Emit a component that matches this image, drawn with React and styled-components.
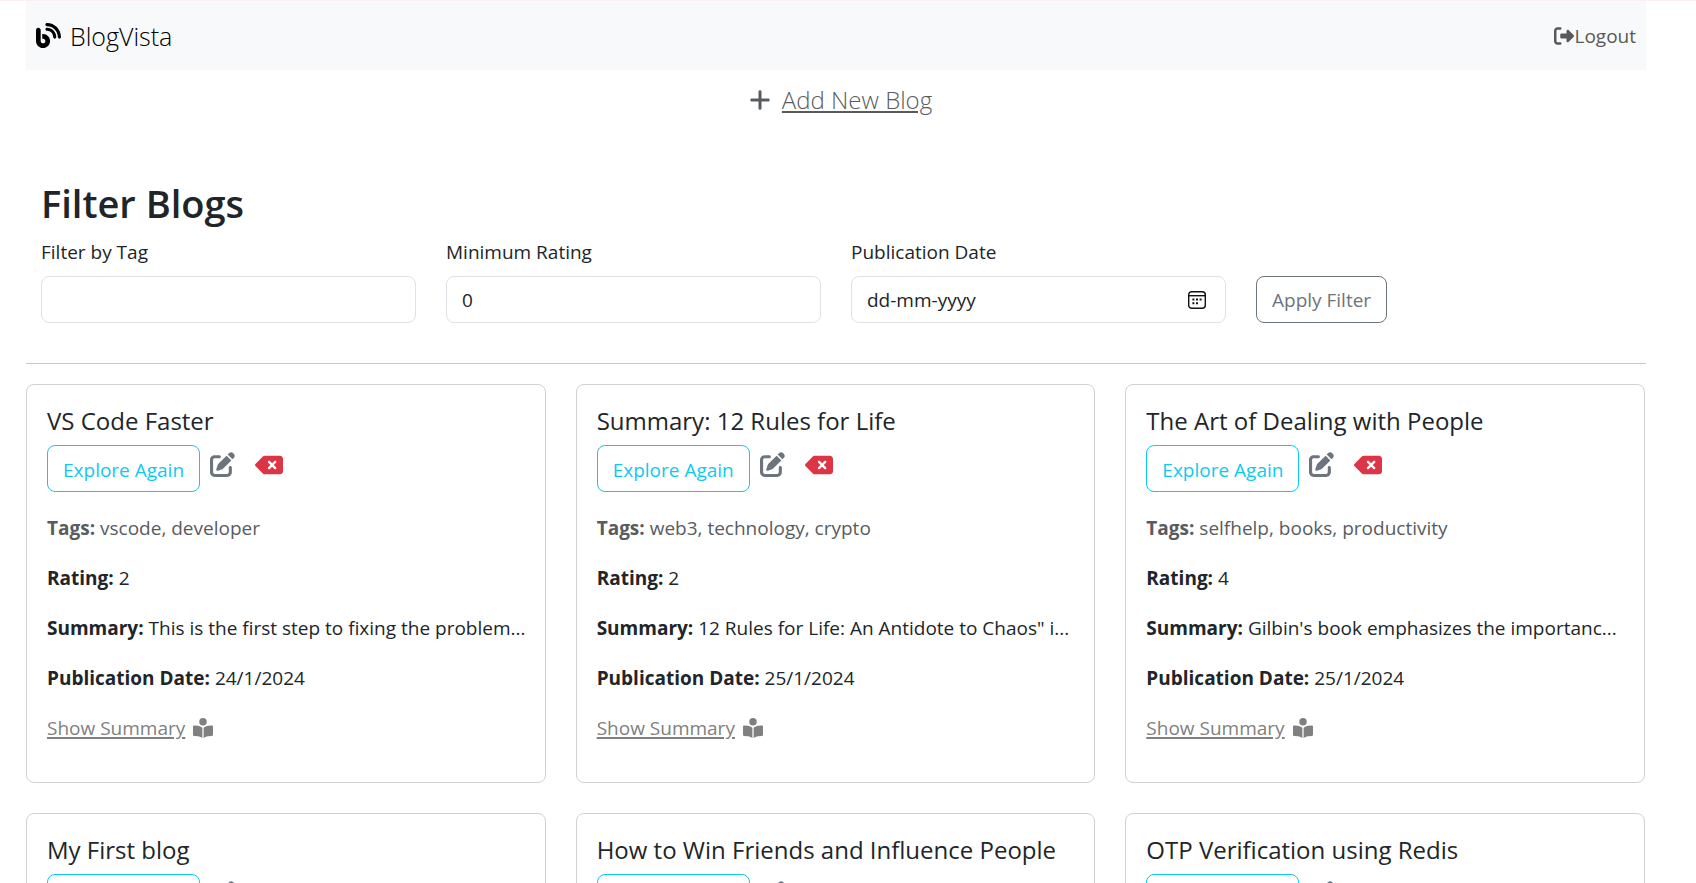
import React, { useId } from "react";
import styled, { createGlobalStyle } from "styled-components";
import {
  FaBlog,
  FaBookOpenReader,
  FaDeleteLeft,
  FaPenToSquare,
  FaPlus,
  FaRightFromBracket,
} from "react-icons/fa6";

const GlobalStyle = createGlobalStyle`
  *, *::before, *::after { box-sizing: border-box; }
  body {
    margin: 0;
    background: #fff;
    color: #212529;
    font-family: "Open Sans", "Noto Sans", sans-serif;
    font-size: 19px;
    line-height: 30px;
  }
  h1, h2, p { margin: 0; }
  svg { display: block; flex: none; }
`;

const Page = styled.div`
  border-top: 1px solid #fdeef3;
  padding: 0 50px 30px 26px;
`;

const Navbar = styled.header`
  display: flex;
  align-items: center;
  justify-content: space-between;
  height: 69px;
  padding: 0 10px;
  background: #f8f9fa;
`;

const Brand = styled.a`
  display: flex;
  align-items: center;
  gap: 9px;
  color: #000;
  font-size: 25px;
  font-weight: 300;
  text-decoration: none;
`;

const NavLink = styled.a`
  display: flex;
  align-items: center;
  color: #595959;
  text-decoration: none;
`;

const AddRow = styled.div`
  display: flex;
  justify-content: center;
  align-items: center;
  gap: 10px;
  height: 60px;
  padding-left: 8px;
  color: #595c5f;
`;

const AddLink = styled.a`
  color: inherit;
  font-size: 24px;
  font-weight: 300;
  text-decoration-thickness: 2px;
  text-underline-offset: 2px;
`;

const Filters = styled.form`
  padding: 50px 0 40px;
  border-bottom: 1px solid #c7c8c9;
`;

const FiltersTitle = styled.h1`
  padding: 0 15px;
  font-size: 38px;
  font-weight: 600;
  line-height: 46px;
  margin-bottom: 11px;
`;

const FilterRow = styled.div`
  display: grid;
  grid-template-columns: repeat(4, 1fr);
  align-items: end;
`;

const Field = styled.div`
  display: flex;
  flex-direction: column;
  align-items: stretch;
  gap: 9px;
  padding: 0 15px;
`;

const InputFrame = styled.div`
  display: flex;
  align-items: center;
  height: 47px;
  padding: 0 19px 0 15px;
  border: 1px solid #dee2e6;
  border-radius: 8px;
`;

const TextInput = styled.input`
  flex: 1;
  min-width: 0;
  padding: 0;
  border: 0;
  outline: 0;
  background: none;
  color: #212529;
  font: inherit;
  &::placeholder { color: #212529; opacity: 1; }
`;

const IconButton = styled.button`
  display: flex;
  align-items: center;
  padding: 0;
  border: 0;
  background: none;
  color: ${(p) => p.$color};
  height: ${(p) => p.$height};
  cursor: pointer;
`;

const OutlineButton = styled.button`
  height: 47px;
  padding: 0 15px;
  border: 1px solid ${(p) => p.$color};
  border-radius: 8px;
  background: none;
  color: ${(p) => p.$color};
  font: inherit;
  white-space: nowrap;
  cursor: pointer;
`;

const ExploreButton = styled(OutlineButton)`
  padding-top: 2px;
`;

const CardGrid = styled.main`
  display: grid;
  grid-template-columns: repeat(3, minmax(0, 1fr));
  gap: 30px;
  padding: 20px 1px 0 0;
`;

const Card = styled.article`
  display: flex;
  flex-direction: column;
  gap: 20px;
  padding: 20px 20px 39px;
  border: 1px solid #d0d1d2;
  border-radius: 8px;
`;

const CardTitle = styled.h2`
  margin-bottom: 8px;
  font-size: 24px;
  font-weight: 500;
  line-height: 32px;
`;

const Actions = styled.div`
  display: flex;
  align-items: flex-start;
  gap: 20px;
  height: 48px;
`;

const MainActions = styled.div`
  display: flex;
  align-items: flex-start;
  gap: 10px;
`;

const Line = styled.p`
  color: ${(p) => (p.$muted ? "#585c5f" : "#212529")};
  white-space: nowrap;
`;

const SummaryRow = styled.div`
  display: flex;
  align-items: center;
  gap: 8px;
  color: #808080;
`;

const SummaryLink = styled.a`
  color: inherit;
  text-decoration-thickness: 2px;
  text-underline-offset: 2px;
`;

function CalendarIcon() {
  return (
    <svg width="18" height="18" viewBox="0 0 18 18" fill="none" stroke="#111" strokeWidth="1.4">
      <rect x="0.7" y="0.7" width="16.6" height="16.6" rx="3" />
      <path d="M1 4.7h16" />
      <path d="M4.4 8.6h2M8 8.6h2M11.6 8.6h2M4.4 12.2h2M8 12.2h2" strokeWidth="2" />
    </svg>
  );
}

function FilterField({ label, children, ...inputProps }) {
  const id = useId();
  return (
    <Field>
      <label htmlFor={id}>{label}</label>
      <InputFrame>
        <TextInput id={id} type="text" {...inputProps} />
        {children}
      </InputFrame>
    </Field>
  );
}

function BlogCard({ title, details }) {
  return (
    <Card>
      <div>
        <CardTitle>{title}</CardTitle>
        <Actions>
          <MainActions>
            <ExploreButton type="button" $color="#0dcaf0">Explore Again</ExploreButton>
            <IconButton type="button" aria-label="Edit" $color="#6c757d" $height="39px">
              <FaPenToSquare size={25} />
            </IconButton>
          </MainActions>
          <IconButton type="button" aria-label="Delete" $color="#dc3545" $height="39px">
            <FaDeleteLeft size={28} />
          </IconButton>
        </Actions>
      </div>
      {details && (
        <>
          <Line $muted><strong>Tags:</strong> {details.tags}</Line>
          <Line><strong>Rating:</strong> {details.rating}</Line>
          <Line><strong>Summary:</strong> {details.summary}</Line>
          <Line><strong>Publication Date:</strong> {details.date}</Line>
          <SummaryRow>
            <SummaryLink href="#summary">Show Summary</SummaryLink>
            <FaBookOpenReader size={20} />
          </SummaryRow>
        </>
      )}
    </Card>
  );
}

const blogs = [
  {
    title: "VS Code Faster",
    details: { tags: "vscode, developer", rating: 2, summary: "This is the first step to fixing the problem...", date: "24/1/2024" },
  },
  {
    title: "Summary: 12 Rules for Life",
    details: { tags: "web3, technology, crypto", rating: 2, summary: "12 Rules for Life: An Antidote to Chaos\" i...", date: "25/1/2024" },
  },
  {
    title: "The Art of Dealing with People",
    details: { tags: "selfhelp, books, productivity", rating: 4, summary: "Gilbin's book emphasizes the importanc...", date: "25/1/2024" },
  },
  { title: "My First blog" },
  { title: "How to Win Friends and Influence People" },
  { title: "OTP Verification using Redis" },
];

export default function App() {
  return (
    <>
      <GlobalStyle />
      <Page>
        <Navbar>
          <Brand href="#home"><FaBlog size={25} />BlogVista</Brand>
          <NavLink href="#logout"><FaRightFromBracket size={20} />Logout</NavLink>
        </Navbar>
        <AddRow>
          <FaPlus size={24} />
          <AddLink href="#new">Add New Blog</AddLink>
        </AddRow>
        <Filters onSubmit={(e) => e.preventDefault()}>
          <FiltersTitle>Filter Blogs</FiltersTitle>
          <FilterRow>
            <FilterField label="Filter by Tag" />
            <FilterField label="Minimum Rating" defaultValue="0" inputMode="numeric" />
            <FilterField label="Publication Date" placeholder="dd-mm-yyyy">
              <IconButton type="button" aria-label="Open calendar" $color="#111" $height="18px">
                <CalendarIcon />
              </IconButton>
            </FilterField>
            <Field>
              <div>
                <OutlineButton type="submit" $color="#6c757d">Apply Filter</OutlineButton>
              </div>
            </Field>
          </FilterRow>
        </Filters>
        <CardGrid>
          {blogs.map((b) => <BlogCard key={b.title} {...b} />)}
        </CardGrid>
      </Page>
    </>
  );
}
